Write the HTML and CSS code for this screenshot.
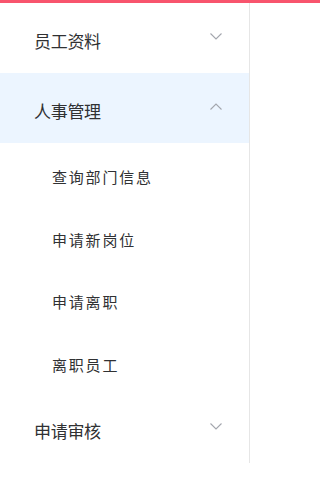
FILE: index.html
```html
<!DOCTYPE html>
<html lang="zh-CN">
<head>
<meta charset="utf-8">
<title>菜单</title>
<link rel="stylesheet" href="styles.css">
</head>
<body>
<div class="topbar"></div>
<ul class="menu">
  <li class="submenu">
    <div class="submenu-title">
      <span class="title-text">员工资料</span>
      <svg class="arrow" width="12" height="7" viewBox="0 0 12 7"><polyline points="0.5,0.5 6,6 11.5,0.5" fill="none" stroke="#a3a6ad" stroke-width="1.1"/></svg>
    </div>
  </li>
  <li class="submenu open">
    <div class="submenu-title active">
      <span class="title-text">人事管理</span>
      <svg class="arrow" width="12" height="7" viewBox="0 0 12 7"><polyline points="0.5,6.5 6,1 11.5,6.5" fill="none" stroke="#a3a6ad" stroke-width="1.1"/></svg>
    </div>
    <ul class="sub-list">
      <li class="sub-item">查询部门信息</li>
      <li class="sub-item">申请新岗位</li>
      <li class="sub-item">申请离职</li>
      <li class="sub-item">离职员工</li>
    </ul>
  </li>
  <li class="submenu">
    <div class="submenu-title">
      <span class="title-text">申请审核</span>
      <svg class="arrow" width="12" height="7" viewBox="0 0 12 7"><polyline points="0.5,0.5 6,6 11.5,0.5" fill="none" stroke="#a3a6ad" stroke-width="1.1"/></svg>
    </div>
  </li>
</ul>
</body>
</html>
```
FILE: styles.css
```css
html, body {
  margin: 0;
  padding: 0;
  background: #ffffff;
}
body {
  font-family: "Noto Sans CJK SC", "Noto Sans", sans-serif;
  color: #303133;
}
.topbar {
  height: 3px;
  background: #f8546d;
}
.menu {
  list-style: none;
  margin: 0;
  padding: 0;
  width: 249px;
  border-right: 1px solid #e6e6e6;
}
.submenu {
  margin: 0;
  padding: 0;
}
.submenu-title {
  height: 70px;
  box-sizing: border-box;
  padding: 5px 27px 0 34px;
  display: flex;
  align-items: center;
  justify-content: space-between;
}
.submenu-title.active {
  background: #ecf5ff;
}
.title-text {
  font-size: 17px;
  letter-spacing: -0.3px;
  line-height: 20px;
}
.arrow {
  display: block;
  margin-top: -9px;
}
.sub-list {
  list-style: none;
  margin: 0;
  padding: 0;
}
.sub-item {
  height: 62.5px;
  box-sizing: border-box;
  padding: 5px 0 0 52px;
  display: flex;
  align-items: center;
  font-size: 15px;
  letter-spacing: 1.8px;
}
```
